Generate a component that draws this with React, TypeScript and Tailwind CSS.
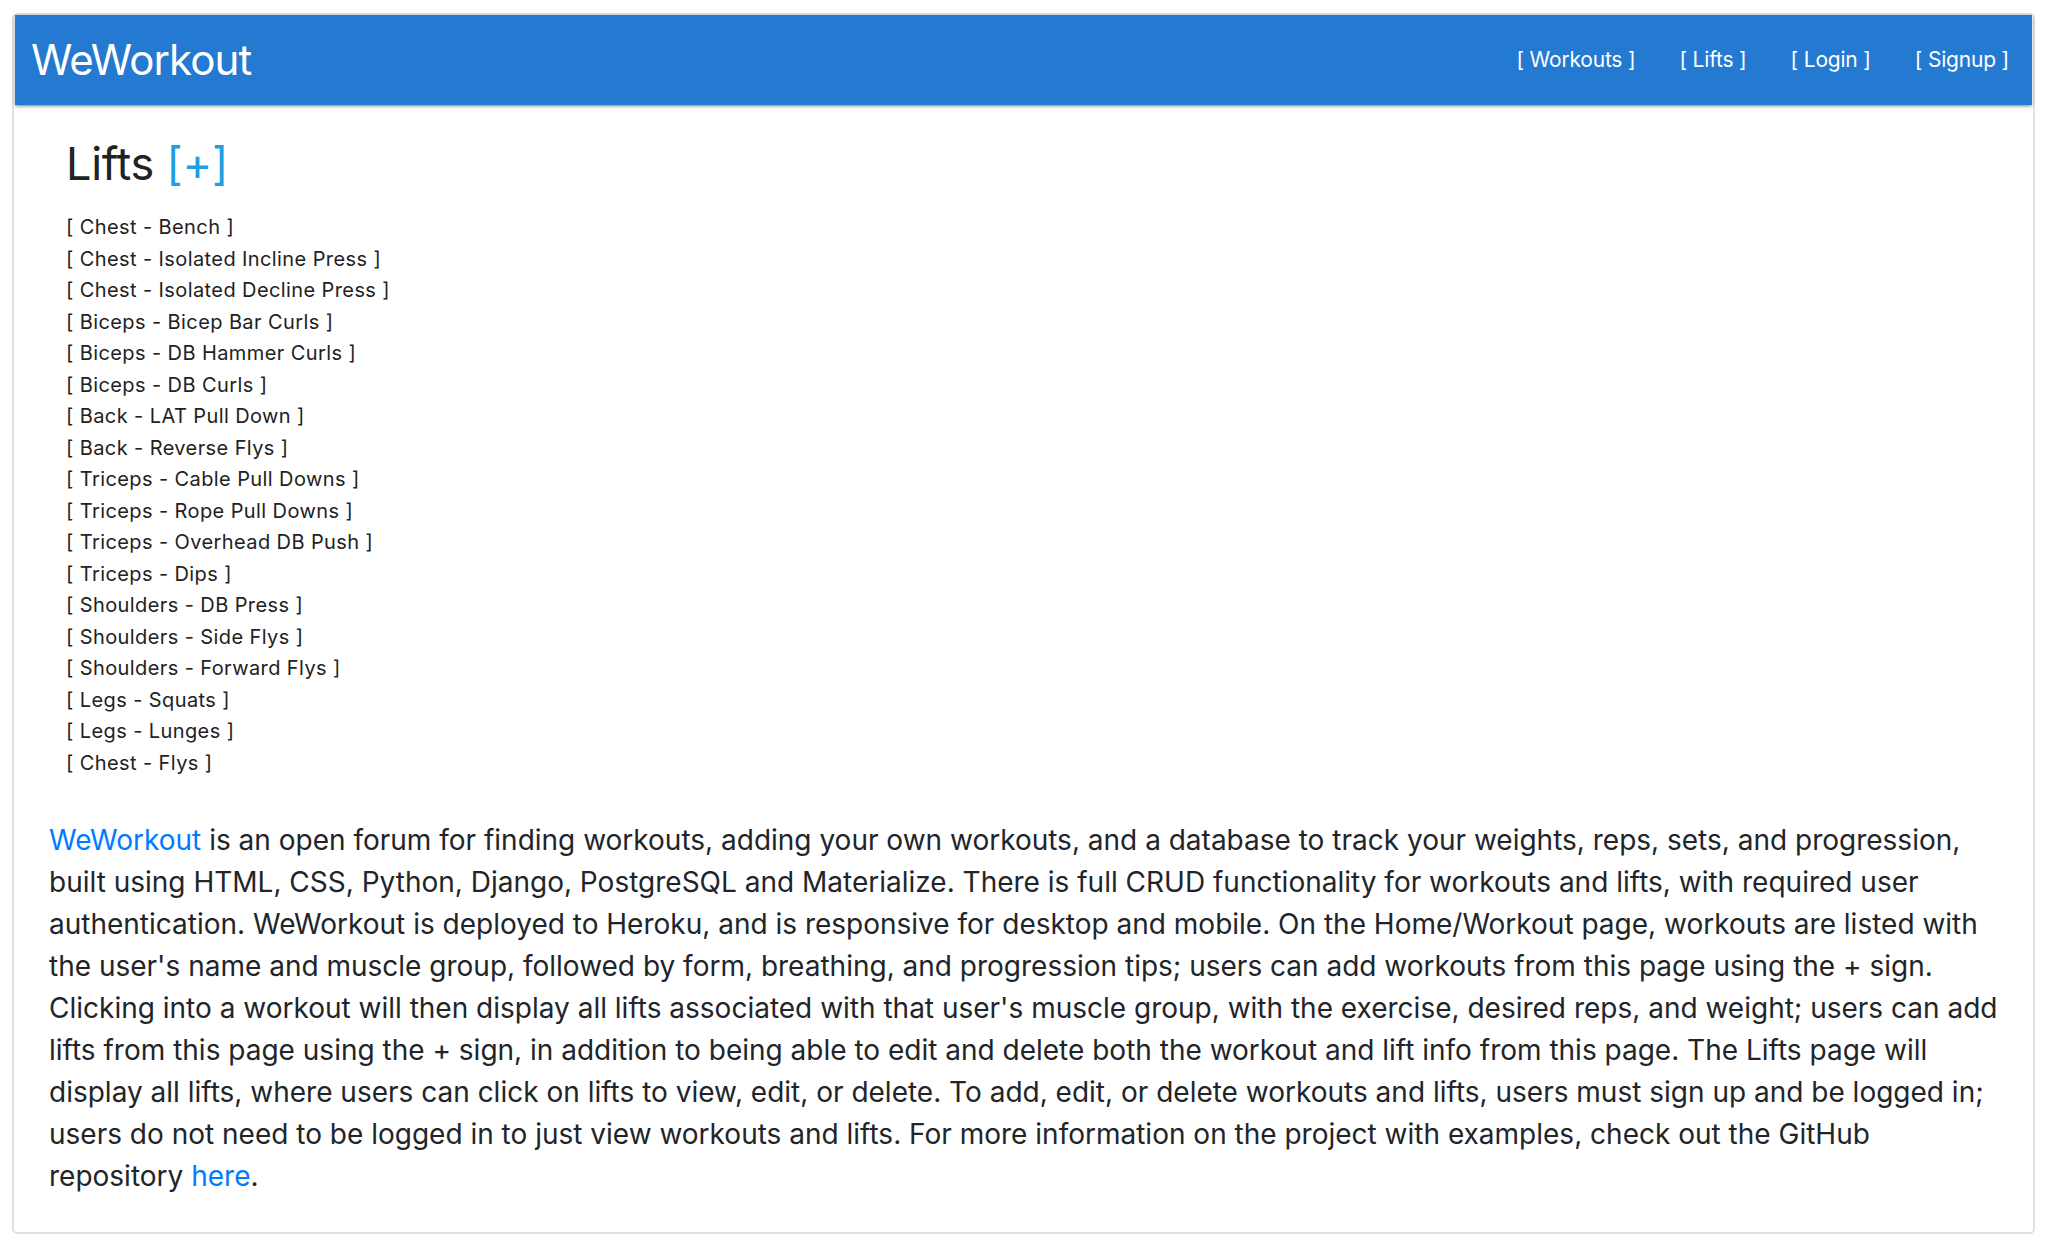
import React from "react";

const lifts = [
  "Chest - Bench",
  "Chest - Isolated Incline Press",
  "Chest - Isolated Decline Press",
  "Biceps - Bicep Bar Curls",
  "Biceps - DB Hammer Curls",
  "Biceps - DB Curls",
  "Back - LAT Pull Down",
  "Back - Reverse Flys",
  "Triceps - Cable Pull Downs",
  "Triceps - Rope Pull Downs",
  "Triceps - Overhead DB Push",
  "Triceps - Dips",
  "Shoulders - DB Press",
  "Shoulders - Side Flys",
  "Shoulders - Forward Flys",
  "Legs - Squats",
  "Legs - Lunges",
  "Chest - Flys",
];

const navLinks = ["Workouts", "Lifts", "Login", "Signup"];

export default function App() {
  return (
    <div className="min-h-screen bg-white pt-[13px] pl-[12px] pr-[15px] pb-[12px] font-['Inter',sans-serif] text-[#212529]">
      <div className="border-2 border-[#e2e2e2] rounded-[5px] px-px">
        {/* Navbar */}
        <nav className="h-[90px] bg-[#2479d1] flex items-center justify-between pl-[16px] shadow-[0_2px_2px_0_rgba(0,0,0,0.14),0_3px_1px_-2px_rgba(0,0,0,0.12),0_1px_5px_0_rgba(0,0,0,0.2)]">
          <a href="#" className="text-white text-[42px] tracking-[-0.9px] leading-none">
            WeWorkout
          </a>
          <ul className="flex items-center pr-[1px]">
            {navLinks.map(link => (
              <li key={link}>
                <a href="#" className="block px-[22px] text-white text-[21px] tracking-[-0.2px] leading-[88px]">
                  [ {link} ]
                </a>
              </li>
            ))}
          </ul>
        </nav>

        {/* Lifts list */}
        <div className="pl-[51px] pt-[31px]">
          <h3 className="text-[45px] leading-[56px] tracking-[-0.3px] text-[#222]">
            Lifts <a href="#" className="text-[#1e9fe3]">[+]</a>
          </h3>
          <div className="mt-[20px] flex flex-col">
            {lifts.map(lift => (
              <a key={lift} href="#" className="text-[20px] tracking-[0.4px] leading-[31.5px] text-[#222]">
                [ {lift} ]
              </a>
            ))}
          </div>
        </div>

        {/* About */}
        <p className="px-[34px] pt-[40px] pb-[35px] text-[28px] leading-[42px] text-[#212529]">
          <a href="#" className="text-[#007bff]">WeWorkout</a> is an open forum for finding workouts, adding your own
          workouts, and a database to track your weights, reps, sets, and progression, built using HTML, CSS, Python,
          Django, PostgreSQL and Materialize. There is full CRUD functionality for workouts and lifts, with required user
          authentication. WeWorkout is deployed to Heroku, and is responsive for desktop and mobile. On the Home/Workout
          page, workouts are listed with the user's name and muscle group, followed by form, breathing, and progression
          tips; users can add workouts from this page using the + sign. Clicking into a workout will then display all
          lifts associated with that user's muscle group, with the exercise, desired reps, and weight; users can add
          lifts from this page using the + sign, in addition to being able to edit and delete both the workout and lift
          info from this page. The Lifts page will display all lifts, where users can click on lifts to view, edit, or
          delete. To add, edit, or delete workouts and lifts, users must sign up and be logged in; users do not need to
          be logged in to just view workouts and lifts. For more information on the project with examples, check out
          the GitHub repository <a href="#" className="text-[#007bff]">here</a>.
        </p>
      </div>
    </div>
  );
}
